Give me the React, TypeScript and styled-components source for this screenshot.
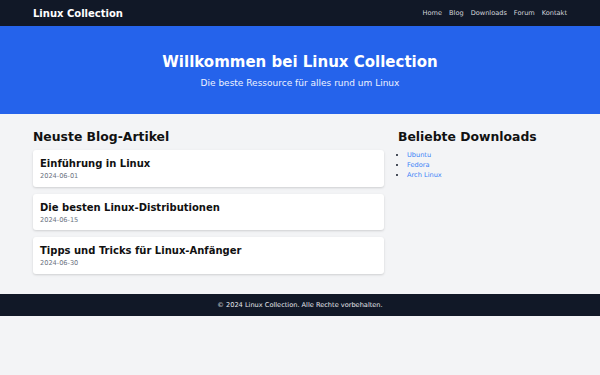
import React from 'react';
import styled, { createGlobalStyle } from 'styled-components';

// ----------
// Style
// ----------

const GlobalStyle = createGlobalStyle`
  html, body {
    margin: 0;
    padding: 0;
    background: #f3f4f6;
    font-family: "DejaVu Sans", "Liberation Sans", sans-serif;
    color: #111827;
  }

  * {
    box-sizing: border-box;
  }
`;

const Header = styled.header`
  background: #111827;
  color: #fff;
`;

const Container = styled.div`
  padding: 0 33px;
`;

const HeaderBar = styled(Container)`
  display: flex;
  align-items: center;
  justify-content: space-between;
  height: 26px;
`;

const Logo = styled.div`
  font-size: 10px;
  font-weight: bold;
  line-height: 14px;
  padding-top: 1px;
`;

const Nav = styled.nav`
  display: flex;
  gap: 7px;

  a {
    color: #d1d5db;
    font-size: 6.6px;
    line-height: 10px;
    text-decoration: none;
  }
`;

const Hero = styled.section`
  background: #2563eb;
  color: #fff;
  text-align: center;
  padding: 27px 0 24px;
`;

const HeroTitle = styled.h1`
  margin: 0 0 5px;
  font-size: 15px;
  line-height: 18px;
  font-weight: bold;
`;

const HeroText = styled.p`
  margin: 0;
  font-size: 9px;
  line-height: 14px;
  color: #eef2ff;
`;

const Main = styled(Container)`
  display: grid;
  grid-template-columns: 351px 1fr;
  column-gap: 14px;
  padding-top: 14px;
  padding-bottom: 20px;
`;

const SectionTitle = styled.h2`
  margin: 0 0 6px;
  font-size: 12.4px;
  line-height: 16px;
  font-weight: bold;
  color: #111;
  position: relative;
  top: 1px;
`;

const PostList = styled.div`
  display: flex;
  flex-direction: column;
  gap: 7px;
`;

const PostCard = styled.article`
  background: #fff;
  border-radius: 3px;
  padding: 7px 7px 5.5px;
  box-shadow: 0 1px 3px rgba(0, 0, 0, 0.1), 0 1px 2px rgba(0, 0, 0, 0.06);
`;

const PostTitle = styled.h3`
  margin: 0;
  font-size: 10px;
  line-height: 14px;
  font-weight: bold;
  color: #111;
`;

const PostDate = styled.p`
  margin: 0;
  font-size: 6.6px;
  line-height: 10px;
  color: #6b7280;
`;

const DownloadList = styled.ul`
  margin: 0;
  padding-left: 9px;
  list-style: disc;

  li {
    font-size: 6.6px;
    line-height: 10px;
  }

  a {
    color: #3b82f6;
    text-decoration: none;
  }
`;

const Footer = styled.footer`
  background: #111827;
  color: #e5e7eb;
  text-align: center;
  font-size: 6.6px;
  line-height: 10px;
  padding: 6.25px 0;
`;

// ----------
// Data
// ----------

const navItems = ['Home', 'Blog', 'Downloads', 'Forum', 'Kontakt'];

const posts = [
  { title: 'Einführung in Linux', date: '2024-06-01' },
  { title: 'Die besten Linux-Distributionen', date: '2024-06-15' },
  { title: 'Tipps und Tricks für Linux-Anfänger', date: '2024-06-30' },
];

const downloads = ['Ubuntu', 'Fedora', 'Arch Linux'];

// ----------

const App: React.FC = () => (
  <>
    <GlobalStyle />
    <Header>
      <HeaderBar>
        <Logo>Linux Collection</Logo>
        <Nav>
          {navItems.map((item) => (
            <a key={item} href="#">
              {item}
            </a>
          ))}
        </Nav>
      </HeaderBar>
    </Header>
    <Hero>
      <HeroTitle>Willkommen bei Linux Collection</HeroTitle>
      <HeroText>Die beste Ressource für alles rund um Linux</HeroText>
    </Hero>
    <Main as="main">
      <section>
        <SectionTitle>Neuste Blog-Artikel</SectionTitle>
        <PostList>
          {posts.map((post) => (
            <PostCard key={post.title}>
              <PostTitle>{post.title}</PostTitle>
              <PostDate>{post.date}</PostDate>
            </PostCard>
          ))}
        </PostList>
      </section>
      <aside>
        <SectionTitle>Beliebte Downloads</SectionTitle>
        <DownloadList>
          {downloads.map((name) => (
            <li key={name}>
              <a href="#">{name}</a>
            </li>
          ))}
        </DownloadList>
      </aside>
    </Main>
    <Footer>© 2024 Linux Collection. Alle Rechte vorbehalten.</Footer>
  </>
);

export default App;
